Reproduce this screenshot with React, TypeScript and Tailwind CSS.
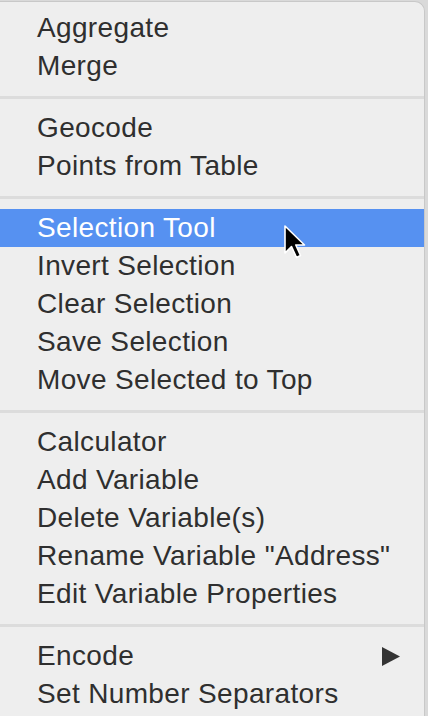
import React from "react";

type Item = { label: string; active?: boolean; submenu?: boolean };

const groups: Item[][] = [
  [{ label: "Aggregate" }, { label: "Merge" }],
  [{ label: "Geocode" }, { label: "Points from Table" }],
  [
    { label: "Selection Tool", active: true },
    { label: "Invert Selection" },
    { label: "Clear Selection" },
    { label: "Save Selection" },
    { label: "Move Selected to Top" },
  ],
  [
    { label: "Calculator" },
    { label: "Add Variable" },
    { label: "Delete Variable(s)" },
    { label: "Rename Variable \"Address\"" },
    { label: "Edit Variable Properties" },
  ],
  [{ label: "Encode", submenu: true }, { label: "Set Number Separators" }],
];

function Row({ item }: { item: Item }) {
  return (
    <div
      className={
        "relative flex h-[38px] items-center pl-[37px] pr-[24px] " +
        (item.active ? "bg-[#5691f1] text-white" : "text-[#2f2f2f]")
      }
    >
      <span className="flex-1 whitespace-nowrap">{item.label}</span>
      {item.submenu && (
        <svg width="18" height="19" viewBox="0 0 18 19">
          <polygon points="0,0 18,9.5 0,19" fill="#343434" />
        </svg>
      )}
      {item.active && (
        <svg
          width="24"
          height="36"
          viewBox="0 0 24 36"
          className="absolute left-[283px] top-[16px]"
        >
          <path
            d="M2 1 L2 28 L8.5 21.5 L13.5 32.5 L17.5 30.5 L12.8 20 L21.5 20 Z"
            fill="#000"
            stroke="#fff"
            strokeWidth="1.6"
            strokeLinejoin="round"
          />
        </svg>
      )}
    </div>
  );
}

export default function App() {
  return (
    <div className="h-[716px] w-[428px] overflow-hidden bg-[#d9d9d9]">
      <div
        className="mt-[1px] h-[715px] w-[425px] rounded-tr-[10px] border-r border-t border-[#c8c8c8] bg-[#eeeeee] pt-[7px] text-[28px] leading-none tracking-[0.35px]"
        style={{ fontFamily: '"Liberation Sans", Arial, sans-serif' }}
      >
        {groups.map((g, gi) => (
          <div key={gi}>
            {gi > 0 && (
              <div className="pb-[10px] pt-[11px]">
                <div className="h-[3px] bg-[#dcdcdc]" />
              </div>
            )}
            {g.map((it) => (
              <Row key={it.label} item={it} />
            ))}
          </div>
        ))}
      </div>
    </div>
  );
}
